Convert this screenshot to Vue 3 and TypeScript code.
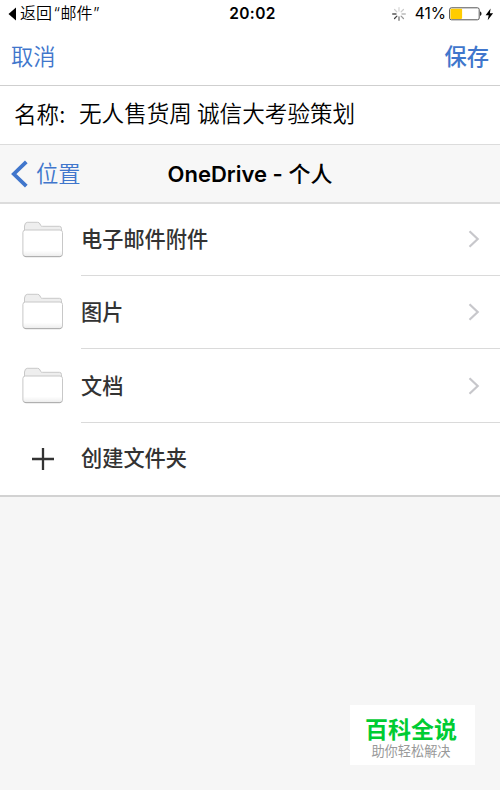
<script setup lang="ts">
interface Folder {
  id: number
  name: string
}

const folders: Folder[] = [
  { id: 1, name: '电子邮件附件' },
  { id: 2, name: '图片' },
  { id: 3, name: '文档' },
]

const spokes: { angle: number; color: string }[] = [
  { angle: 0, color: '#d8d8d8' },
  { angle: 45, color: '#cccccc' },
  { angle: 90, color: '#bbbbbb' },
  { angle: 135, color: '#999999' },
  { angle: 180, color: '#777777' },
  { angle: 225, color: '#444444' },
  { angle: 270, color: '#555555' },
  { angle: 315, color: '#d0d0d0' },
]
</script>

<template>
  <div class="screen">
    <header class="status">
      <div class="back-app">
        <svg class="back-arrow" width="9" height="14" viewBox="0 0 9 14"><path d="M8 0.5V13.5L0.5 7Z" fill="#000" /></svg>
        <span class="back-text">返回<span class="open-quote">“</span>邮件<span class="close-quote">”</span></span>
      </div>
      <span class="time">20:02</span>
      <div class="indicators">
        <svg class="spinner" width="14" height="14" viewBox="-7 -7 14 14">
          <line
            v-for="s in spokes"
            :key="s.angle"
            x1="0"
            y1="-3"
            x2="0"
            y2="-6.3"
            :stroke="s.color"
            stroke-width="1.3"
            stroke-linecap="round"
            :transform="`rotate(${s.angle})`"
          />
        </svg>
        <span class="percent">41%</span>
        <svg class="battery" width="34" height="14" viewBox="0 0 34 14">
          <rect x="0.6" y="0.8" width="29.6" height="12" rx="1.8" fill="#fff" stroke="#555" stroke-width="1" />
          <rect x="1.5" y="1.7" width="11.6" height="10.2" rx="0.8" fill="#ffcc00" />
          <path d="M31 4.6C33 5 33 8.6 31 9Z" fill="#222" />
        </svg>
        <svg class="bolt" width="9" height="13" viewBox="0 0 9 13"><path d="M5.6 0.5L0.6 7.3H3.7L2.7 12.3L8.1 5.3H4.9Z" fill="#000" /></svg>
      </div>
    </header>

    <nav class="actions">
      <span class="cancel">取消</span>
      <span class="save">保存</span>
    </nav>

    <section class="name-row">
      <span class="label">名称:</span>
      <span class="value">无人售货周 诚信大考验策划</span>
    </section>

    <nav class="location">
      <div class="location-back">
        <svg width="18" height="28" viewBox="0 0 18 28"><path d="M15.3 1.8L2.8 14L15.3 26.2" fill="none" stroke="#4076cc" stroke-width="3.8" /></svg>
        <span>位置</span>
      </div>
      <h1 class="title">OneDrive - <span class="owner">个人</span></h1>
      <div class="location-end"></div>
    </nav>

    <main class="list">
      <div v-for="f in folders" :key="f.id" class="row">
        <svg class="folder" width="42" height="37" viewBox="0 0 42 37">
          <defs>
            <linearGradient :id="`front-${f.id}`" x1="0" y1="0" x2="0" y2="1">
              <stop offset="0" stop-color="#fff" />
              <stop offset="0.78" stop-color="#fff" />
              <stop offset="1" stop-color="#ececec" />
            </linearGradient>
          </defs>
          <path d="M2.5 11V5Q3 1.3 5.3 1.3H15.5Q17.3 1.3 18 3L18.7 4.5Q19.2 5.3 20.5 5.3H37.5Q39.3 5.3 39.5 7.5V11Z" fill="#eeeeee" stroke="#c8c8c8" />
          <rect x="0.9" y="9" width="39.6" height="26.5" rx="2.5" :fill="`url(#front-${f.id})`" stroke="#c8c8c8" />
          <path d="M2 34.6Q2.5 35.7 4 35.7H37.5Q39 35.7 39.5 34.6" fill="none" stroke="#aaa" />
        </svg>
        <div class="cell">
          <span>{{ f.name }}</span>
          <svg width="12" height="18" viewBox="0 0 12 18"><path d="M1.5 1.3L9.7 9L1.5 16.7" fill="none" stroke="#c7c7cb" stroke-width="2.2" /></svg>
        </div>
      </div>
      <div class="row">
        <svg class="plus" width="24" height="24" viewBox="0 0 24 24"><path d="M12 1V23M1 12H23" stroke="#333" stroke-width="2.3" /></svg>
        <div class="cell last"><span>创建文件夹</span></div>
      </div>
    </main>

    <footer class="bottom">
      <div class="brand">
        <strong>百科全说</strong>
        <span>助你轻松解决</span>
      </div>
    </footer>
  </div>
</template>

<style>
body {
  margin: 0;
  background: #f6f6f6;
}
</style>

<style scoped>
.screen {
  width: 500px;
  height: 790px;
  display: flex;
  flex-direction: column;
  overflow: hidden;
  background: #f6f6f6;
  color: #000;
  font-family: Inter, "Noto Sans CJK SC", sans-serif;
  white-space: nowrap;
}
svg {
  display: block;
  flex: none;
}
.status {
  height: 28px;
  display: grid;
  grid-template-columns: 1fr auto 1fr;
  align-items: center;
  background: #fff;
  line-height: 28px;
}
.back-app {
  display: flex;
  align-items: center;
  padding-left: 8px;
  gap: 3px;
}
.back-text {
  font-size: 16px;
  font-weight: 350;
  line-height: 27px;
  height: 28px;
}
.open-quote {
  margin: 0 0.5px 0 1.5px;
}
.close-quote {
  margin-left: 0.5px;
}
.time {
  font-size: 15.5px;
  font-weight: 600;
  letter-spacing: 0.4px;
  padding-left: 5px;
}
.indicators {
  display: flex;
  align-items: center;
  justify-content: flex-end;
  padding-right: 6px;
}
.percent {
  font-size: 15.5px;
  margin: 0 3px 0 9px;
}
.bolt {
  margin-left: 2px;
}
.actions {
  height: 57px;
  display: flex;
  justify-content: space-between;
  padding: 0 11px;
  background: #fff;
  border-bottom: 1px solid #cfcfcf;
  color: #4076cc;
  font-size: 22.3px;
  line-height: 57px;
}
.cancel {
  font-weight: 350;
}
.save {
  font-weight: 500;
}
.name-row {
  height: 58px;
  display: flex;
  padding-left: 14px;
  background: #fff;
  border-bottom: 1px solid #dcdcdc;
  font-family: "Noto Sans CJK SC", sans-serif;
  font-size: 22.6px;
  font-weight: 350;
  line-height: 54px;
}
.label {
  width: 65px;
  line-height: 56px;
}
.location {
  height: 57px;
  display: grid;
  grid-template-columns: 1fr auto 1fr;
  align-items: center;
  background: #f7f7f7;
  border-bottom: 2px solid #dcdcdc;
}
.location-back {
  display: flex;
  align-items: center;
  gap: 7px;
  padding-left: 11px;
  color: #4076cc;
  font-size: 22.3px;
  font-weight: 350;
  line-height: 56px;
}
.title {
  margin: 0;
  font-size: 22px;
  font-weight: 600;
  line-height: 56px;
}
.owner {
  font-weight: 500;
}
.list {
  display: flex;
  flex-direction: column;
  background: #fff;
  border-bottom: 2px solid #d2d2d2;
}
.row {
  height: 73.4px;
  display: grid;
  grid-template-columns: 81px 1fr;
  align-items: center;
}
.row:first-child,
.row:last-child {
  height: 72px;
}
.folder {
  margin: 0 0 2px 22px;
}
.plus {
  margin-left: 31px;
}
.cell {
  height: 100%;
  box-sizing: border-box;
  display: flex;
  align-items: center;
  justify-content: space-between;
  padding-right: 20px;
  border-bottom: 1px solid #dadada;
  color: #333;
  font-size: 21.2px;
  font-weight: 500;
  line-height: 70px;
}
.row:first-child .cell {
  padding-bottom: 1px;
}
.cell.last {
  border-bottom-color: transparent;
}
.bottom {
  flex: 1;
  display: flex;
  align-items: flex-end;
  justify-content: flex-end;
  padding: 0 25px 25px 0;
}
.brand {
  width: 125px;
  height: 60px;
  box-sizing: border-box;
  display: flex;
  flex-direction: column;
  align-items: center;
  padding-right: 3px;
  background: #fff;
}
.brand strong {
  color: #00cc33;
  font-size: 23px;
  line-height: 26px;
  padding-top: 12px;
  font-weight: 700;
}
.brand span {
  color: #999;
  font-size: 13.2px;
  line-height: 17px;
}
</style>
